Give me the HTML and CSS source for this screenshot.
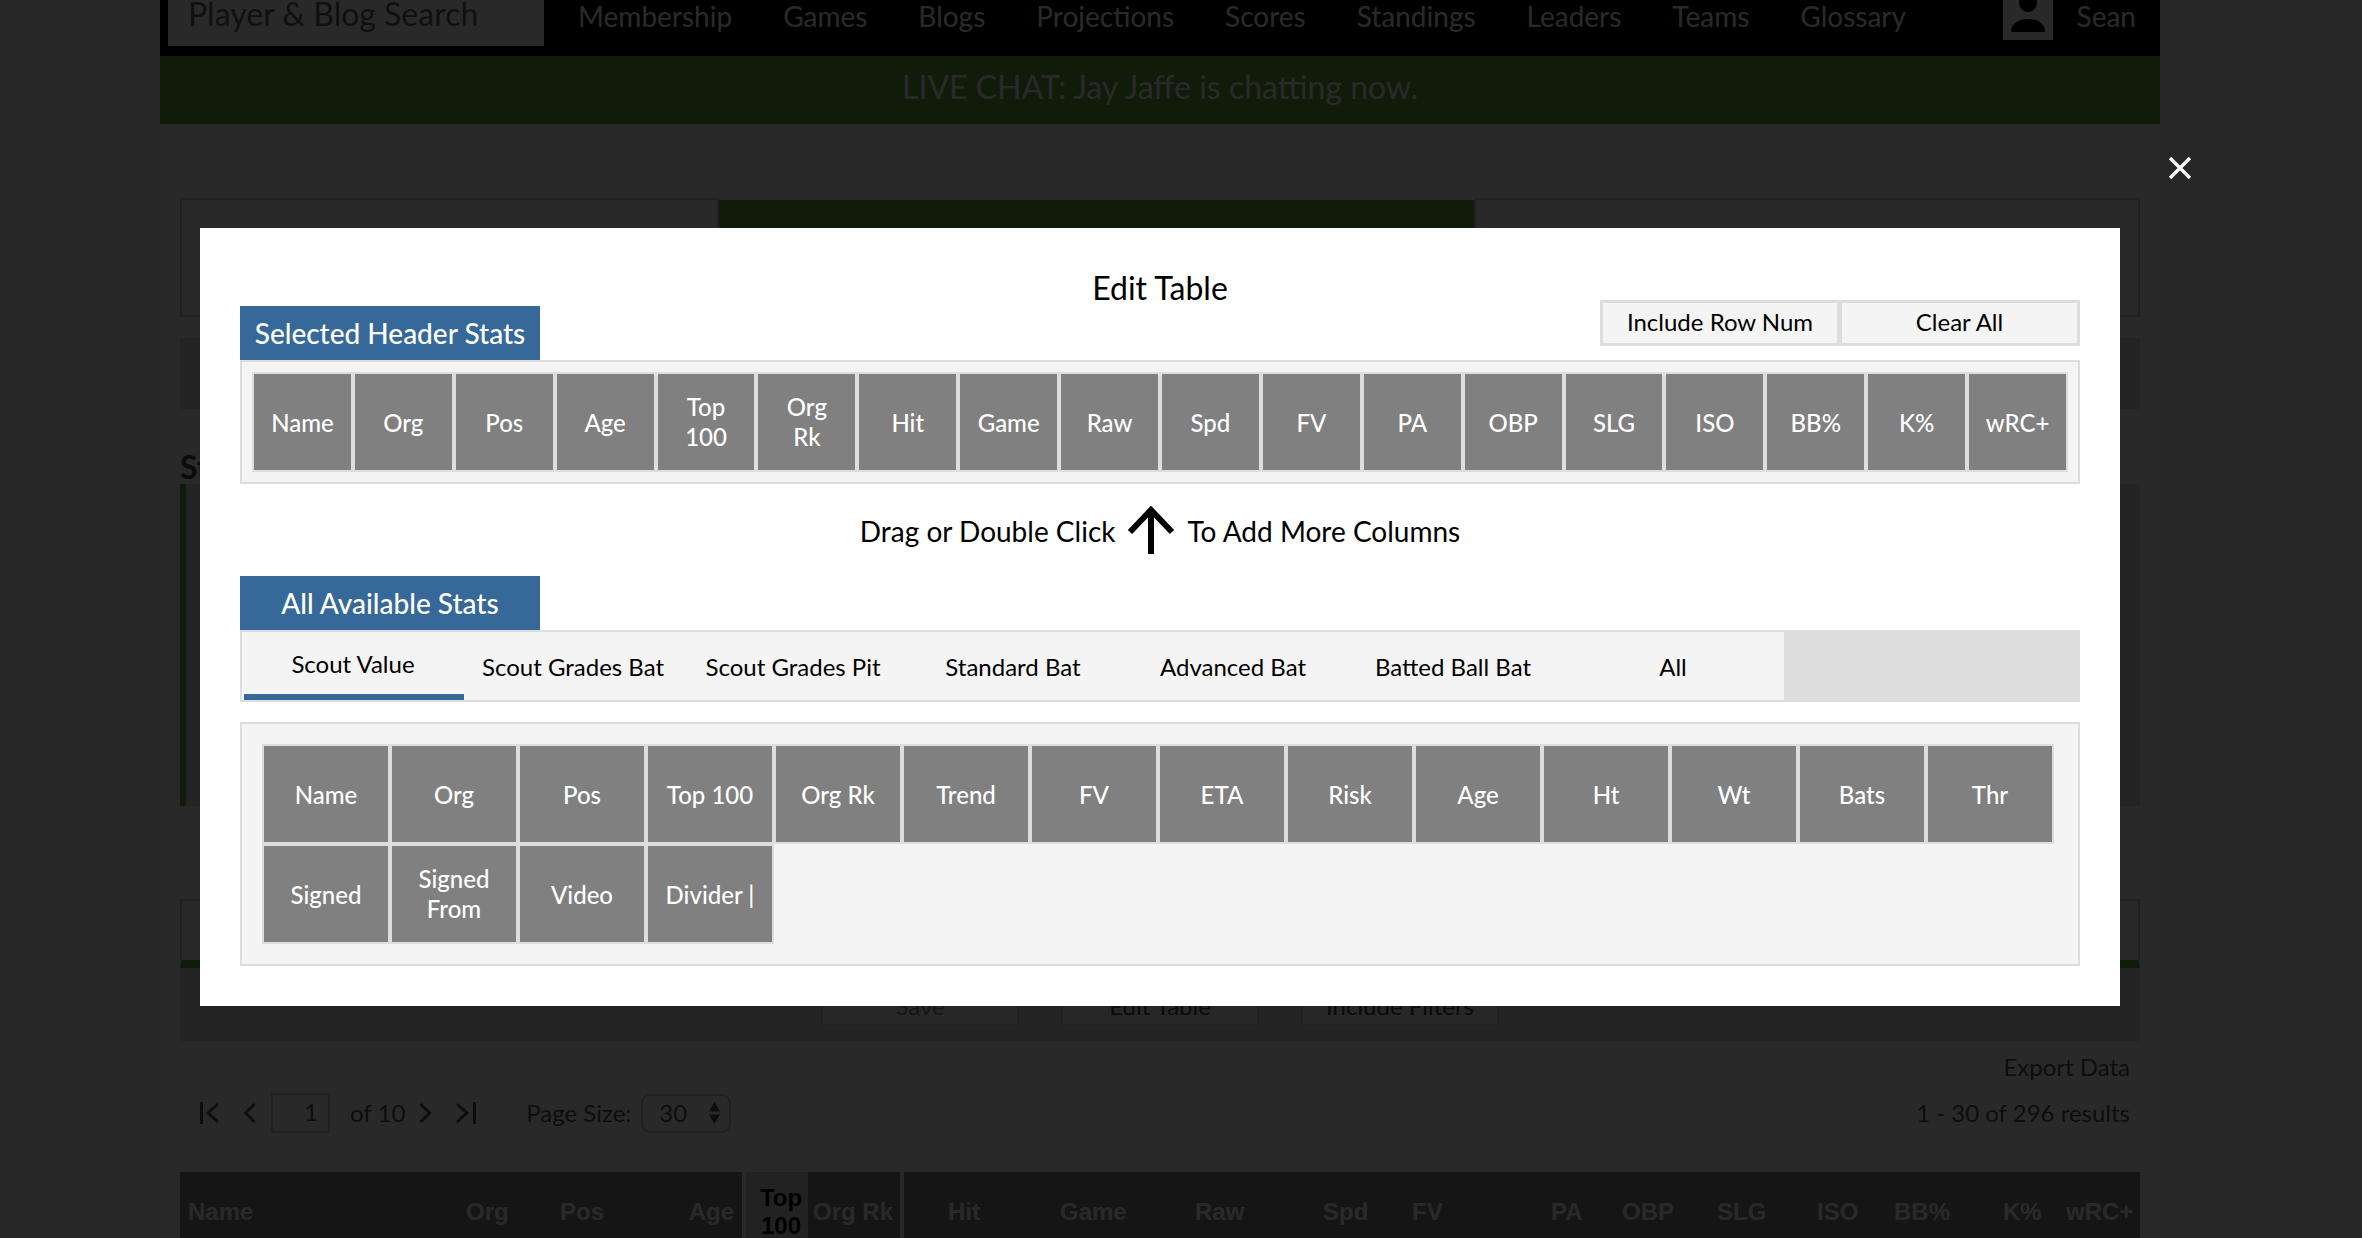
FILE: index.html
```html
<!DOCTYPE html>
<html lang="en">
<head>
<meta charset="utf-8">
<title>Edit Table</title>
<link rel="stylesheet" href="styles.css">
</head>
<body>
<div class="page">
  <nav class="nav">
    <div class="search">Player &amp; Blog Search</div>
    <div class="nav-links">
      <span>Membership</span><span>Games</span><span>Blogs</span><span>Projections</span><span>Scores</span><span>Standings</span><span>Leaders</span><span>Teams</span><span>Glossary</span>
    </div>
    <div class="user">
      <span class="avatar"><svg width="50" height="40" viewBox="0 0 50 40"><circle cx="25" cy="3" r="9" fill="#000"/><path d="M8 32c0-9 8-13 17-13s17 4 17 13z" fill="#000"/></svg></span>
      <span>Sean</span>
    </div>
  </nav>
  <div class="chat">LIVE CHAT: Jay Jaffe is chatting now.</div>
  <main class="content">
    <section class="top-panel">
      <div class="top-left"></div>
      <div class="top-mid"></div>
      <div class="top-right"></div>
    </section>
    <div class="filter-panel"></div>
    <h2 class="heading">Stats</h2>
    <div class="stats-panel"></div>
    <div class="save-input"></div>
    <div class="save-bar">
      <span class="bg-btn bg-btn-muted">Save</span>
      <span class="bg-btn">Edit Table</span>
      <span class="bg-btn">Include Filters</span>
    </div>
    <div class="export">Export Data</div>
    <div class="pager">
      <div class="pager-left">
        <svg class="pg-first" width="20" height="22" viewBox="0 0 20 22"><path d="M1.5 0v22M18 2 8 11l10 9" fill="none" stroke="currentColor" stroke-width="3"/></svg>
        <svg class="pg-prev" width="13" height="22" viewBox="0 0 13 22"><path d="M11.500 2 2.500 11l9 9" fill="none" stroke="currentColor" stroke-width="3"/></svg>
        <span class="pg-input">1</span>
        <span class="pg-of">of 10</span>
        <svg class="pg-next" width="13" height="22" viewBox="0 0 13 22"><path d="M1.500 2l9 9-9 9" fill="none" stroke="currentColor" stroke-width="3"/></svg>
        <svg class="pg-last" width="21" height="22" viewBox="0 0 21 22"><path d="M2 2l10 9-10 9M19.500 0v22" fill="none" stroke="currentColor" stroke-width="3"/></svg>
        <span class="pg-size">Page Size:</span>
        <span class="pg-select">30<svg width="11" height="22" viewBox="0 0 11 22"><path d="M5.500 0 11 9.500H0zM5.500 22 0 12.500h11z" fill="currentColor"/></svg></span>
      </div>
      <div class="pager-right">1 - 30 of 296 results</div>
    </div>
    <div class="grid-head">
      <span>Name</span><span>Org</span><span>Pos</span><span class="right">Age</span><span class="sorted">Top 100</span><span class="orgrk">Org Rk</span><span class="hit">Hit</span><span>Game</span><span>Raw</span><span>Spd</span><span>FV</span><span>PA</span><span>OBP</span><span>SLG</span><span>ISO</span><span>BB%</span><span>K%</span><span>wRC+</span>
    </div>
  </main>
</div>

<div class="backdrop">
  <svg class="close" width="24" height="24" viewBox="0 0 24 24"><path d="M2 2l20 20M22 2 2 22" stroke="#fff" stroke-width="3.200" fill="none"/></svg>
  <div class="modal">
    <div class="modal-head">
      <div class="tab-label">Selected Header Stats</div>
      <div class="modal-title">Edit Table</div>
      <div class="modal-actions">
        <button class="action">Include Row Num</button>
        <button class="action">Clear All</button>
      </div>
    </div>
    <div class="selected-box">
      <div class="selected-row">
        <div class="cell">Name</div><div class="cell">Org</div><div class="cell">Pos</div><div class="cell">Age</div><div class="cell two">Top<br>100</div><div class="cell two">Org<br>Rk</div><div class="cell">Hit</div><div class="cell">Game</div><div class="cell">Raw</div><div class="cell">Spd</div><div class="cell">FV</div><div class="cell">PA</div><div class="cell">OBP</div><div class="cell">SLG</div><div class="cell">ISO</div><div class="cell">BB%</div><div class="cell">K%</div><div class="cell">wRC+</div>
      </div>
    </div>
    <div class="hint">
      <span>Drag or Double Click</span>
      <svg width="48" height="48" viewBox="0 0 48 48"><path d="M24 48V4M3 26 24 4l21 22" fill="none" stroke="#000" stroke-width="6"/></svg>
      <span>To Add More Columns</span>
    </div>
    <div class="tab-label">All Available Stats</div>
    <div class="tabs">
      <div class="tab active">Scout Value</div>
      <div class="tab">Scout Grades Bat</div>
      <div class="tab">Scout Grades Pit</div>
      <div class="tab">Standard Bat</div>
      <div class="tab">Advanced Bat</div>
      <div class="tab">Batted Ball Bat</div>
      <div class="tab">All</div>
      <div class="tabs-fill"></div>
    </div>
    <div class="available-box">
      <div class="available-grid">
        <div class="cell">Name</div><div class="cell">Org</div><div class="cell">Pos</div><div class="cell">Top 100</div><div class="cell">Org Rk</div><div class="cell">Trend</div><div class="cell">FV</div><div class="cell">ETA</div><div class="cell">Risk</div><div class="cell">Age</div><div class="cell">Ht</div><div class="cell">Wt</div><div class="cell">Bats</div><div class="cell">Thr</div>
        <div class="cell">Signed</div><div class="cell two">Signed<br>From</div><div class="cell">Video</div><div class="cell">Divider |</div>
      </div>
    </div>
  </div>
</div>
</body>
</html>
```
FILE: styles.css
```css
* { box-sizing: border-box; }
html, body { margin: 0; height: 1238px; overflow: hidden; }
body { background: #eee; font-family: Lato, "Open Sans", sans-serif; font-size: 24px; color: #666; }

.page { width: 2000px; height: 1238px; margin-left: 160px; background: #fff; overflow: hidden; }

.nav { display: flex; height: 56px; background: #000; color: #fff; font-size: 28px; line-height: 32px; padding-left: 8px; }
.search { width: 376px; height: 46px; padding-left: 20px; background: #fff; color: #666; font-size: 32px; line-height: 28px; }
.nav-links { display: flex; gap: 51px; margin-left: 34px; }
.user { display: flex; gap: 24px; margin-left: auto; padding-right: 24px; }
.avatar { display: block; width: 50px; height: 40px; background: #fff; }
.avatar svg { display: block; }

.chat { height: 68px; background: #64a93e; color: #fff; font-size: 32px; line-height: 62px; text-align: center; }

.content { padding: 74px 20px 0; }
.top-panel { display: flex; height: 119px; }
.top-left, .top-right { border: 2px solid #d4d4d4; }
.top-left { width: 539px; }
.top-mid { width: 755px; margin-top: 2px; background: #64a93e; }
.top-right { flex: 1; }
.filter-panel { height: 71px; margin-top: 21px; background: #dcdcdc; }
.heading { height: 75px; margin: 0; padding-top: 44px; color: #444; font-size: 32px; line-height: 28px; font-weight: 700; }
.stats-panel { height: 322px; background: #dcdcdc; border-left: 6px solid #64a93e; }
.save-input { height: 69px; margin-top: 93px; border: 2px solid #d4d4d4; border-bottom: 8px solid #64a93e; }
.save-bar { display: flex; height: 73px; padding: 8px 0 15px 641px; gap: 42px; background: #dcdcdc; }
.bg-btn { width: 198px; height: 50px; border: 2px solid #d4d4d4; background: #f0f0f0; text-align: center; color: #444; line-height: 56px; }
.bg-btn-muted { color: #888; }

.export { height: 30px; margin-top: 11px; padding-right: 10px; color: #555; line-height: 30px; text-align: right; }
.pager { display: flex; justify-content: space-between; align-items: center; height: 40px; margin-top: 11px; padding-right: 10px; color: #555; }
.pager-left { display: flex; align-items: center; padding-left: 20px; }
.pager-right, .pg-of, .pg-size { padding-bottom: 2px; }
.pg-prev { margin-left: 23px; }
.pg-input { width: 59px; height: 40px; margin-left: 15px; padding-right: 10px; border: 2px solid #c8c8c8; text-align: right; line-height: 34px; }
.pg-of { margin-left: 20px; }
.pg-next { margin-left: 14px; }
.pg-last { margin-left: 23px; }
.pg-size { margin-left: 50px; }
.pg-select { display: flex; align-items: center; justify-content: space-between; width: 90px; height: 39px; margin-left: 10px; padding: 0 9px 2px 16px; border: 2px solid #c8c8c8; border-radius: 9px; }
.pg-select svg { margin-top: 2px; }

.grid-head { display: grid; grid-template-columns: 278px 94px 128px 62px 66px 96px 148px 135px 128px 89px 139px 71px 95px 100px 77px 109px 63px 82px; align-items: center; height: 80px; margin-top: 39px; background: #838383; color: #fff; font-family: "Liberation Sans", Arial, sans-serif; font-size: 24px; font-weight: 700; line-height: 28px; }
.grid-head span { padding-left: 8px; }
.grid-head .right { padding: 0 8px 0 0; text-align: right; }
.grid-head .sorted { align-self: stretch; display: flex; align-items: center; justify-content: center; padding: 0 0 0 8px; text-align: center; background: #d4d4d4; border-left: 4px solid #fff; color: #000; }
.grid-head .orgrk { align-self: stretch; display: flex; align-items: center; border-right: 4px solid #fff; padding: 0 0 0 5px; white-space: nowrap; }
.grid-head .hit { padding-left: 44px; }

.backdrop { position: fixed; inset: 0; background: rgba(0, 0, 0, .84); }
.close { position: absolute; left: 2168px; top: 156px; }
.modal { position: absolute; left: 200px; top: 228px; width: 1920px; height: 778px; padding: 0 40px; background: #fff; color: #000; }

.modal-head { display: grid; grid-template-columns: 1fr auto 1fr; align-items: start; height: 132px; }
.modal-head .tab-label { margin-top: 78px; }
.modal-title { margin-top: 38px; font-size: 32px; line-height: 44px; }
.modal-actions { display: flex; justify-content: flex-end; margin-top: 72px; }
.action { width: 240px; height: 46px; margin: 0; padding: 0 0 2px; border: 3px solid #ddd; background: #f4f4f4; color: #000; font: 24px/38px Lato, sans-serif; }
.action + .action { border-left-width: 2px; }

.tab-label { width: 300px; height: 54px; background: #36689a; color: #fff; font-size: 28px; line-height: 54px; text-align: center; font-weight: 500; }

.selected-box { height: 124px; padding: 10px; border: 2px solid #ddd; background: #f4f4f4; }
.selected-row { display: flex; height: 100px; }
.selected-row .cell { flex: 1 1 0; min-width: 0; }

.cell { display: flex; align-items: center; justify-content: center; height: 100px; padding-top: 2px; border: 2px solid #ddd; background: #808080; color: #fff; line-height: 30px; text-align: center; font-weight: 500; }
.cell.two { padding-top: 0; }

.hint { display: flex; align-items: center; justify-content: center; gap: 12px; height: 92px; padding-top: 2px; font-size: 28px; }
.hint svg { display: block; margin: -2px 1px 0 -1px; }

.tabs { display: flex; height: 72px; padding-left: 2px; border: 2px solid #ddd; background: #f4f4f4; }
.tab { display: flex; align-items: center; justify-content: center; width: 220px; padding-right: 2px; }
.tab.active { padding: 0 2px 0 0; border-bottom: 6px solid #36689a; }
.tabs-fill { flex: 1; background: #ddd; }

.available-box { height: 244px; margin-top: 20px; padding: 20px; border: 2px solid #ddd; background: #f4f4f4; }
.available-grid { display: grid; grid-template-columns: repeat(14, 128px); }
```
